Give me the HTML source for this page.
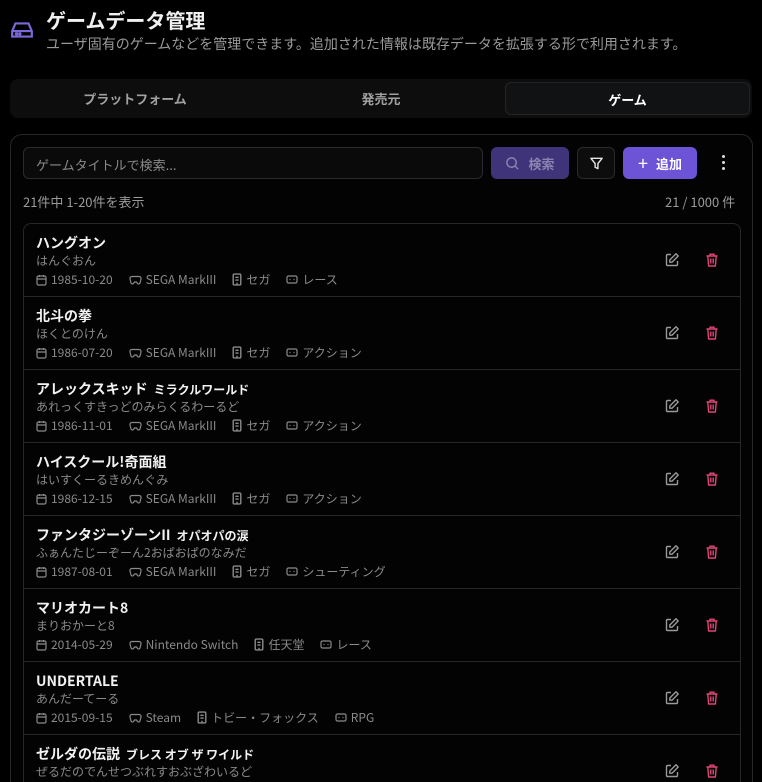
<!DOCTYPE html>
<html><head><meta charset="utf-8"><style>
*{box-sizing:border-box;margin:0;padding:0}
html,body{width:762px;height:782px;overflow:hidden}
body{background:#000;color:#e5e5e5;font-family:"Liberation Sans","Noto Sans CJK JP",sans-serif;position:relative}
.abs{position:absolute}
.h1{left:46px;top:5px;font-size:20px;font-weight:700;color:#f0f0f0;font-family:"Noto Sans CJK JP",sans-serif}
.sub{left:46px;top:34px;font-size:14px;color:#9a9a9a;font-family:"Noto Sans CJK JP",sans-serif;white-space:nowrap}
.tabs{left:10px;top:79px;width:742px;height:39px;background:#0d0d0e;border-radius:8px}
.tab{position:absolute;top:0;height:39px;line-height:39px;text-align:center;font-size:13px;color:#a0a0a0;font-weight:700;font-family:"Noto Sans CJK JP",sans-serif}
.tab.act{top:3px;height:33px;line-height:33px;background:#111214;border:1px solid #232426;border-radius:6px;color:#fff}
.card{left:10px;top:134px;width:743px;height:660px;border:1px solid #26272a;border-radius:12px;background:#030303}
.inp{left:23px;top:147px;width:460px;height:32px;border:1px solid #2a2b2e;border-radius:6px;background:#0a0a0b;font-size:13px;color:#8a8a8a;padding:7px 12px;font-family:"Noto Sans CJK JP",sans-serif}
.btn{height:32px;border-radius:6px;font-size:13px;font-weight:700;font-family:"Noto Sans CJK JP",sans-serif;display:flex;align-items:center;justify-content:center;gap:8px}
.cnt{top:192px;font-size:13px;color:#9a9a9a;font-family:"Noto Sans CJK JP",sans-serif}
.list{left:23px;top:223px;width:718px;height:580px;border:1px solid #26272a;border-radius:8px;overflow:hidden}
.row{position:absolute;left:0;width:716px;height:73px;border-bottom:1px solid #26272a;font-family:"Noto Sans CJK JP",sans-serif}
.t{position:absolute;left:12px;top:9px;font-size:14px;font-weight:700;color:#f2f2f2;white-space:nowrap}
.t small{font-size:12px;margin-left:6px}
.r{position:absolute;left:12px;top:28px;font-size:12px;color:#8a8a8a}
.m{position:absolute;left:12px;top:47px;font-size:12px;color:#8a8a8a;display:flex;align-items:center;white-space:nowrap}
.m span{display:flex;align-items:center;margin-right:16px}
.m svg{margin-right:4px}
.ed{position:absolute;left:640px;top:25px}
.dl{position:absolute;left:680px;top:25px}
</style></head><body>
<svg class="abs" style="left:10px;top:20px" width="24" height="20" viewBox="0 0 22 18" fill="none" stroke="#7b68d8" stroke-width="2"><path d="M2 10 L5 3 H17 L20 10 V15 H2 Z M2 10 H20"/><circle cx="6" cy="12.5" r=".6" fill="#7b68d8"/><circle cx="9" cy="12.5" r=".6" fill="#7b68d8"/></svg>
<div class="abs h1">ゲームデータ管理</div>
<div class="abs sub">ユーザ固有のゲームなどを管理できます。追加された情報は既存データを拡張する形で利用されます。</div>
<div class="abs tabs">
<div class="tab" style="left:0;width:250px">プラットフォーム</div>
<div class="tab" style="left:248px;width:246px">発売元</div>
<div class="tab act" style="left:495px;width:245px">ゲーム</div>
</div>
<div class="abs card"></div>
<div class="abs inp">ゲームタイトルで検索...</div>
<div class="abs btn" style="left:491px;top:147px;width:78px;background:#3f3479;color:#8c84b0"><svg width="15" height="15" viewBox="0 0 16 16" fill="none" stroke="#8c84b0" stroke-width="1.5"><circle cx="7" cy="7" r="5"/><path d="M11 11l3 3"/></svg>検索</div>
<div class="abs btn" style="left:577px;top:147px;width:38px;background:#0d0d0e;border:1px solid #2a2b2e"><svg width="15" height="15" viewBox="0 0 16 16" fill="none" stroke="#e5e5e5" stroke-width="1.5" stroke-linejoin="round"><path d="M2 2.5h12L9.5 8v5.5l-3-1.5V8z"/></svg></div>
<div class="abs btn" style="left:623px;top:147px;width:74px;background:#6d54d6;color:#fff"><span style="font-size:18px;font-weight:400">+</span>追加</div>
<div class="abs" style="left:722px;top:155px;width:4px;height:16px"><div style="width:3px;height:3px;background:#ddd;border-radius:2px;margin-bottom:3px"></div><div style="width:3px;height:3px;background:#ddd;border-radius:2px;margin-bottom:3px"></div><div style="width:3px;height:3px;background:#ddd;border-radius:2px"></div></div>
<div class="abs cnt" style="left:23px">21件中 1-20件を表示</div>
<div class="abs cnt" style="left:665px">21 / 1000 件</div>
<div class="abs list">
<script>
var rows=[["ハングオン","","はんぐおん","1985-10-20","SEGA MarkIII","セガ","レース"],
["北斗の拳","","ほくとのけん","1986-07-20","SEGA MarkIII","セガ","アクション"],
["アレックスキッド","ミラクルワールド","あれっくすきっどのみらくるわーるど","1986-11-01","SEGA MarkIII","セガ","アクション"],
["ハイスクール!奇面組","","はいすくーるきめんぐみ","1986-12-15","SEGA MarkIII","セガ","アクション"],
["ファンタジーゾーンII","オパオパの涙","ふぁんたじーぞーん2おぱおぱのなみだ","1987-08-01","SEGA MarkIII","セガ","シューティング"],
["マリオカート8","","まりおかーと8","2014-05-29","Nintendo Switch","任天堂","レース"],
["UNDERTALE","","あんだーてーる","2015-09-15","Steam","トビー・フォックス","RPG"],
["ゼルダの伝説","ブレス オブ ザ ワイルド","ぜるだのでんせつぶれすおぶざわいるど","2017-03-03","Nintendo Switch","任天堂","アクション"]];
var cal='<svg width="11" height="12" viewBox="0 0 11 12" fill="none" stroke="#8a8a8a" stroke-width="1.2"><rect x="1" y="2" width="9" height="9" rx="1.5"/><path d="M1 5h9M3.5 1v2M7.5 1v2"/></svg>';
var pad='<svg width="13" height="10" viewBox="0 0 13 10" fill="none" stroke="#8a8a8a" stroke-width="1.2"><path d="M3 1.5h7a2 2 0 012 2.5l-1 4a1.5 1.5 0 01-2.5.5L7.5 7h-2L4.5 8.5A1.5 1.5 0 012 8L1 4a2 2 0 012-2.5z"/></svg>';
var bld='<svg width="10" height="13" viewBox="0 0 9 12" fill="none" stroke="#8a8a8a" stroke-width="1.3"><rect x="1" y="1" width="7" height="10" rx="1"/><path d="M3 4h3M3 6.5h3M4.5 9v2"/></svg>';
var tag='<svg width="12" height="9" viewBox="0 0 12 9" fill="none" stroke="#8a8a8a" stroke-width="1.2"><rect x="1" y="1" width="10" height="7" rx="1.5"/><path d="M3.5 4.5h1M7.5 4.5h1"/></svg>';
var ed='<svg width="16" height="16" viewBox="0 0 16 16" fill="none" stroke="#9a9a9a" stroke-width="1.4" stroke-linejoin="round"><path d="M7 2.5H3.5a1 1 0 00-1 1v9a1 1 0 001 1h9a1 1 0 001-1V9"/><path d="M12 1.8l2.2 2.2L8 10.2H5.8V8z"/></svg>';
var dl='<svg width="16" height="16" viewBox="0 0 16 16" fill="none" stroke="#e0457b" stroke-width="1.4" stroke-linejoin="round"><path d="M2.5 4h11M6 4V2.2h4V4M3.8 4l.8 10h6.8l.8-10M6.8 6.5v5M9.2 6.5v5"/></svg>';
var h='';
rows.forEach(function(r,i){h+='<div class="row" style="top:'+(i*73)+'px"><div class="t">'+r[0]+(r[1]?'<small>'+r[1]+'</small>':'')+'</div><div class="r">'+r[2]+'</div><div class="m"><span>'+cal+r[3]+'</span><span>'+pad+r[4]+'</span><span>'+bld+r[5]+'</span><span>'+tag+r[6]+'</span></div><div class="ed">'+ed+'</div><div class="dl">'+dl+'</div></div>';});
document.write(h);
</script>
</div>
</body></html>
